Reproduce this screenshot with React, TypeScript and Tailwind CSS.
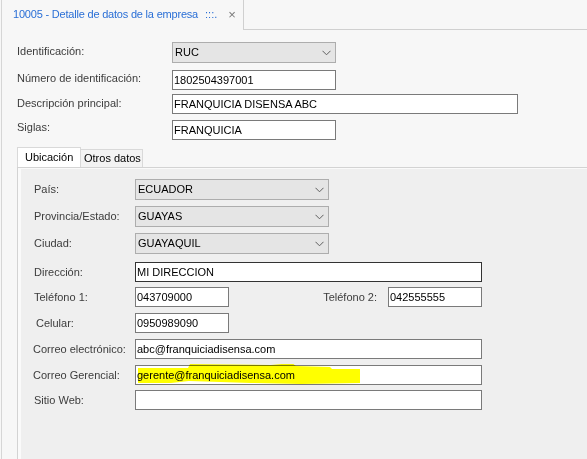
import React from "react";

const font = { fontFamily: '"Liberation Sans", Arial, sans-serif' };

function Chevron() {
  return (
    <svg width="9" height="6" viewBox="0 0 9 6" className="shrink-0">
      <path d="M0.5 0.8 L4.5 4.8 L8.5 0.8" fill="none" stroke="#5f5f5f" strokeWidth="1" />
    </svg>
  );
}

function Combo({ value, w }: { value: string; w: string }) {
  return (
    <div className={`${w} h-[21px] bg-[#e5e5e5] border border-[#adadad] flex items-center justify-between pl-[2px] pr-[4px] text-[11px] text-black`}>
      <span>{value}</span>
      <Chevron />
    </div>
  );
}

function Input({ value, w, dark, children }: { value?: string; w: string; dark?: boolean; children?: React.ReactNode }) {
  return (
    <div className={`${w} relative h-[20px] bg-white border ${dark ? "border-[#333333]" : "border-[#7a7a7a]"} flex items-center pl-[1px] text-[11px] text-black`}>
      <span>{value}</span>
      {children}
    </div>
  );
}

function PanelRow({ label, children, mt, lpad }: { label: string; children: React.ReactNode; mt: string; lpad?: string }) {
  return (
    <div className={`flex items-center ${mt}`}>
      <div className={`w-[114px] text-[11px] text-[#3c3c3c] ${lpad ?? "pl-[13px]"}`}>{label}</div>
      {children}
    </div>
  );
}

export default function App() {
  return (
    <div className="w-[587px] h-[459px] bg-[#f7f7f7] pl-px overflow-hidden" style={font}>
      <div className="h-full border-l border-[#d6d6d6] flex flex-col">
        {/* header */}
        <div className="flex h-[30px] shrink-0">
          <div className="w-[242px] border-r border-[#d0d0d0] flex items-center pl-[11px] pb-[1px] text-[11px] whitespace-nowrap">
            <span className="text-[#2a6fd6] tracking-[-0.2px]">10005 - Detalle de datos de la empresa</span>
            <span className="text-[#2a6fd6] ml-[7px]">:::.</span>
            <span className="text-[#7a7a7a] ml-[11px] text-[13px]">×</span>
          </div>
          <div className="flex-1 border-b border-[#d0d0d0]" />
        </div>

        {/* top form */}
        <div className="pl-[15px] text-[11px] text-[#3c3c3c]">
          <div className="flex items-start mt-[12px]">
            <div className="w-[155px] pt-[1px]">Identificación:</div>
            <Combo value="RUC" w="w-[164px]" />
          </div>
          <div className="flex items-start mt-[7px]">
            <div className="w-[155px]">Número de identificación:</div>
            <Input value="1802504397001" w="w-[164px]" />
          </div>
          <div className="flex items-start mt-[4px]">
            <div className="w-[155px] pt-[1px]">Descripción principal:</div>
            <Input value="FRANQUICIA DISENSA ABC" w="w-[346px]" />
          </div>
          <div className="flex items-start mt-[6px]">
            <div className="w-[155px] -mt-[1px]">Siglas:</div>
            <Input value="FRANQUICIA" w="w-[164px]" />
          </div>
        </div>

        {/* tab control */}
        <div className="mt-[7px] pl-[15px] flex-1 flex flex-col">
          <div className="flex items-end h-[20px] text-[11px] text-black">
            <div className="w-[64px] h-[20px] bg-white border border-b-0 border-[#d9d9d9] flex items-center pl-[7px]">Ubicación</div>
            <div className="w-[62px] h-[18px] bg-[#f3f3f3] border border-l-0 border-b-0 border-[#d9d9d9] flex items-center pl-[3px]">Otros datos</div>
          </div>
          <div className="flex-1 border-t border-l border-[#d3d3d3] bg-[#fafafa] pt-px pl-[3px]">
            <div className="h-full bg-[#efefef] pt-[10px]">
              <PanelRow label="País:" mt="">
                <Combo value="ECUADOR" w="w-[194px]" />
              </PanelRow>
              <PanelRow label="Provincia/Estado:" mt="mt-[6px]">
                <Combo value="GUAYAS" w="w-[194px]" />
              </PanelRow>
              <PanelRow label="Ciudad:" mt="mt-[6px]">
                <Combo value="GUAYAQUIL" w="w-[194px]" />
              </PanelRow>
              <PanelRow label="Dirección:" mt="mt-[8px]">
                <Input value="MI DIRECCION" w="w-[347px]" dark />
              </PanelRow>
              <PanelRow label="Teléfono 1:" mt="mt-[5px]">
                <Input value="043709000" w="w-[94px]" />
                <div className="w-[159px] text-right pr-[11px] text-[11px] text-[#3c3c3c]">Teléfono 2:</div>
                <Input value="042555555" w="w-[94px]" />
              </PanelRow>
              <PanelRow label="Celular:" mt="mt-[6px]" lpad="pl-[15px]">
                <Input value="0950989090" w="w-[94px]" />
              </PanelRow>
              <PanelRow label="Correo electrónico:" mt="mt-[6px]" lpad="pl-[12px]">
                <Input value="abc@franquiciadisensa.com" w="w-[347px]" />
              </PanelRow>
              <PanelRow label="Correo Gerencial:" mt="mt-[6px]" lpad="pl-[12px]">
                <Input value="gerente@franquiciadisensa.com" w="w-[347px]">
                  <svg
                    className="absolute left-0 top-[-2px] mix-blend-multiply pointer-events-none"
                    width="230"
                    height="22"
                    viewBox="0 0 230 22"
                  >
                    <polygon
                      points="2,4 52,4 54,0 135,1 156,-1 160,2 194,3 196,5 224,5 224,19 165,20 115,19 53,17 35,19 2,19"
                      fill="#ffff00"
                    />
                  </svg>
                </Input>
              </PanelRow>
              <PanelRow label="Sitio Web:" mt="mt-[5px]">
                <Input value="" w="w-[347px]" />
              </PanelRow>
            </div>
          </div>
        </div>
      </div>
    </div>
  );
}
